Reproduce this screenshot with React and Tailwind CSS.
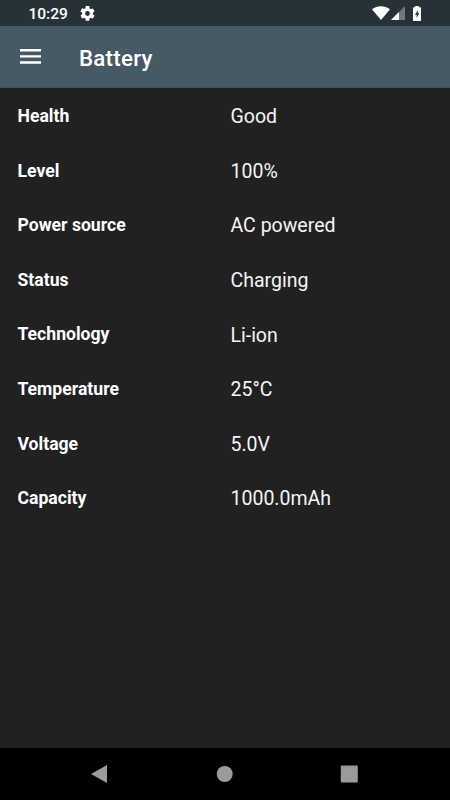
import React from "react";

const rows = [
  { label: "Health", value: "Good" },
  { label: "Level", value: "100%" },
  { label: "Power source", value: "AC powered" },
  { label: "Status", value: "Charging" },
  { label: "Technology", value: "Li-ion" },
  { label: "Temperature", value: "25°C" },
  { label: "Voltage", value: "5.0V" },
  { label: "Capacity", value: "1000.0mAh" },
];

const StatusBar = () => (
  <div className="h-[26px] bg-[#263238] flex items-center pl-[28.5px] pr-[29px]">
    <span className="w-[51px] pt-px text-[15.5px] leading-5 font-medium">
      10:29
    </span>
    <svg viewBox="2 2 20 20" className="size-[15px]" fill="currentColor">
      <path d="M19.14 12.94c.04-.3.06-.61.06-.94s-.02-.64-.07-.94l2.03-1.58a.49.49 0 0 0 .12-.61l-1.92-3.32a.49.49 0 0 0-.59-.22l-2.39.96c-.5-.38-1.03-.7-1.62-.94l-.36-2.54A.48.48 0 0 0 13.92 2h-3.84c-.24 0-.43.17-.47.41l-.36 2.54c-.59.24-1.13.57-1.62.94l-2.39-.96a.48.48 0 0 0-.59.22L2.74 8.87c-.12.21-.08.47.12.61l2.03 1.58c-.05.3-.09.63-.09.94s.02.64.07.94l-2.03 1.58a.49.49 0 0 0-.12.61l1.92 3.32c.12.22.37.29.59.22l2.39-.96c.5.38 1.03.7 1.62.94l.36 2.54c.05.24.24.41.48.41h3.84c.24 0 .44-.17.47-.41l.36-2.54c.59-.24 1.13-.56 1.62-.94l2.39.96c.22.08.47 0 .59-.22l1.92-3.32a.49.49 0 0 0-.12-.61zM12 15.2A3.2 3.2 0 1 1 12 8.8a3.2 3.2 0 0 1 0 6.4z" />
    </svg>
    <div className="ml-auto flex items-center">
      <svg width="18" height="14" viewBox="0 0 18 14" fill="currentColor">
        <path d="M0 3.2C5.2-.9 12.8-.9 18 3.2L9 14z" />
      </svg>
      <svg className="ml-px" width="14" height="14" viewBox="0 0 14 14" fill="currentColor">
        <path d="M14 0V14H0z" opacity=".35" />
        <path d="M8 6V14H0z" />
      </svg>
      <svg className="ml-2" width="8" height="15" viewBox="0 0 8 15" fill="currentColor">
        <path
          fillRule="evenodd"
          d="M2.2 0h3.6v1.2H7.4q.6 0 .6.6V14.4q0 .6-.6.6H.6q-.6 0-.6-.6V1.8q0-.6.6-.6H2.2zM4.8 4 2 8.9h1.7v3.2L6.2 7.2H4.8z"
        />
      </svg>
    </div>
  </div>
);

const App = () => {
  return (
    <div className="w-[450px] h-[800px] flex flex-col bg-[#212121] text-white overflow-hidden font-[Roboto,sans-serif]">
      <StatusBar />

      {/* App bar */}
      <header className="h-[62px] bg-[#455a64] border-b border-[#37474f]/40 flex items-center pl-5">
        <svg width="21" height="15" viewBox="0 0 21 15" fill="currentColor">
          <path d="M0 0h21v2.4H0zM0 6.2h21v2.4H0zM0 12.3h21v2.4H0z" />
        </svg>
        <h1 className="ml-[38px] pt-[4px] text-[22.3px] font-medium tracking-[0.25px]">
          Battery
        </h1>
      </header>

      {/* Battery details */}
      <main className="flex-1">
        {rows.map((row) => (
          <div
            key={row.label}
            className="h-[54.6px] flex items-center border-b border-[#1d1d1d] pt-[3px] pl-[17.5px]"
          >
            <span className="w-[213px] text-[17.6px] font-bold">{row.label}</span>
            <span className="pt-px text-[19.5px] text-[#f5f5f5]">{row.value}</span>
          </div>
        ))}
      </main>

      {/* Navigation bar */}
      <nav className="h-[52.5px] bg-black">
        <svg width="450" height="52" viewBox="0 0 450 52" fill="#9b9b9b">
          <path d="M91 26 107 17V35z" />
          <circle cx="224.7" cy="26" r="8" />
          <rect x="340.8" y="17.5" width="17" height="17" rx="1" />
        </svg>
      </nav>
    </div>
  );
};

export default App;
